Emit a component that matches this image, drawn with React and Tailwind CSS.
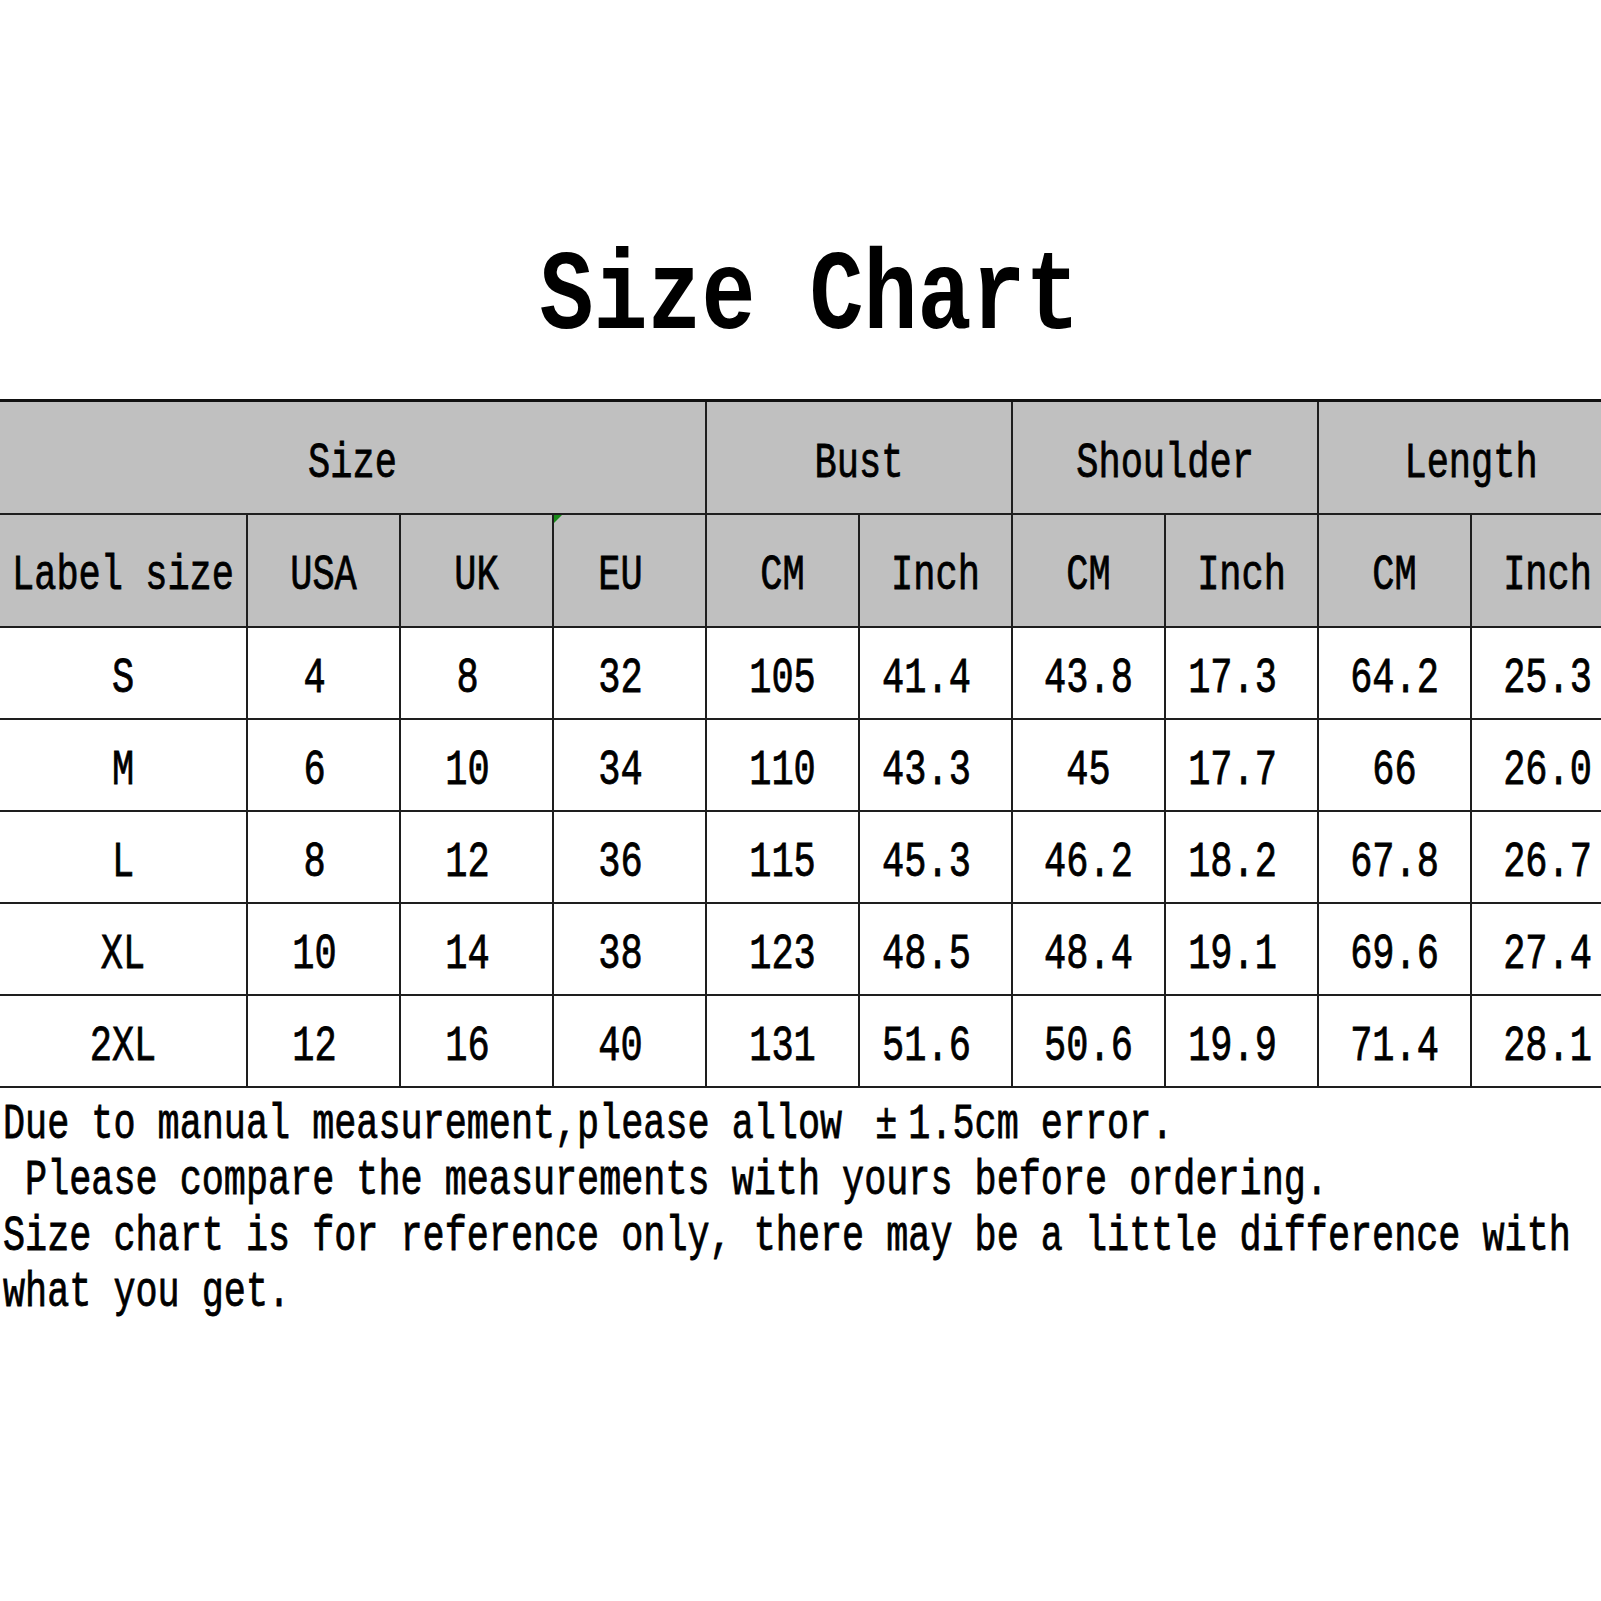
const headerGroups = [
  { label: "Size", span: 4 },
  { label: "Bust", span: 2 },
  { label: "Shoulder", span: 2 },
  { label: "Length", span: 2 },
];

const subHeaders = ["Label size", "USA", "UK", "EU", "CM", "Inch", "CM", "Inch", "CM", "Inch"];

const rows = [
  ["S", "4", "8", "32", "105", "41.4", "43.8", "17.3", "64.2", "25.3"],
  ["M", "6", "10", "34", "110", "43.3", "45", "17.7", "66", "26.0"],
  ["L", "8", "12", "36", "115", "45.3", "46.2", "18.2", "67.8", "26.7"],
  ["XL", "10", "14", "38", "123", "48.5", "48.4", "19.1", "69.6", "27.4"],
  ["2XL", "12", "16", "40", "131", "51.6", "50.6", "19.9", "71.4", "28.1"],
];

// columns whose values sit a little left of centre in the original sheet
const leftish = [1, 2, 3, 5, 7];

// tall narrow glyphs, like the stretched bitmap font in the chart
function Txt({ children }) {
  return (
    <span className="inline-block leading-none whitespace-pre scale-y-[1.35] [-webkit-text-stroke:0.6px_black]">
      {children}
    </span>
  );
}

function Cell({ children, first, header, marker, colSpan, shift }) {
  return (
    <td
      colSpan={colSpan}
      className={
        "relative text-center align-middle p-0 pt-[14px] border-2 border-[#1e1e1e] " +
        (first ? "border-l-0 " : "") +
        (shift ? "pr-[18px] " : "") +
        (header ? "bg-[#c0c0c0]" : "bg-white")
      }
    >
      {marker && (
        <span className="absolute left-0 top-0 w-0 h-0 border-t-[8px] border-r-[8px] border-t-[#1a8a1a] border-r-transparent" />
      )}
      <Txt>{children}</Txt>
    </td>
  );
}

export default function App() {
  return (
    <div className="w-[1601px] h-[1601px] overflow-hidden bg-white text-black font-['Liberation_Mono',monospace]">
      {/* Title */}
      <div className="h-[399px] flex justify-center items-center pt-[196px] pl-[18px]">
        <h1 className="text-[90px] font-bold leading-none">
          <span className="inline-block scale-y-[1.26]">Size Chart</span>
        </h1>
      </div>

      {/* Table */}
      <table className="border-collapse table-fixed w-[1624px] text-[37px] border-t-[3px] border-t-[#111]">
        <colgroup>
          <col className="w-[247px]" />
          {subHeaders.slice(1).map((_, i) => (
            <col key={i} className="w-[153px]" />
          ))}
        </colgroup>
        <tbody>
          <tr className="h-[113px]">
            {headerGroups.map((g, i) => (
              <Cell key={g.label} header first={i === 0} colSpan={g.span}>
                {g.label}
              </Cell>
            ))}
          </tr>
          <tr className="h-[113px]">
            {subHeaders.map((h, i) => (
              <Cell key={i} header first={i === 0} marker={h === "EU"} shift={h === "EU"}>
                {h}
              </Cell>
            ))}
          </tr>
          {rows.map((r) => (
            <tr key={r[0]} className="h-[92px]">
              {r.map((v, i) => (
                <Cell key={i} first={i === 0} shift={leftish.includes(i)}>
                  {v}
                </Cell>
              ))}
            </tr>
          ))}
        </tbody>
      </table>

      {/* Notes */}
      <div className="mt-[10px] text-[36.8px] pl-[3px]">
        <div className="h-[56px] flex items-center">
          <Txt>
            Due to manual measurement,please allow <span className="inline-block w-[2ch] text-center">±</span>1.5cm error.
          </Txt>
        </div>
        <div className="h-[56px] flex items-center">
          <Txt> Please compare the measurements with yours before ordering.</Txt>
        </div>
        <div className="h-[56px] flex items-center">
          <Txt>Size chart is for reference only, there may be a little difference with</Txt>
        </div>
        <div className="h-[56px] flex items-center">
          <Txt>what you get.</Txt>
        </div>
      </div>
    </div>
  );
}
